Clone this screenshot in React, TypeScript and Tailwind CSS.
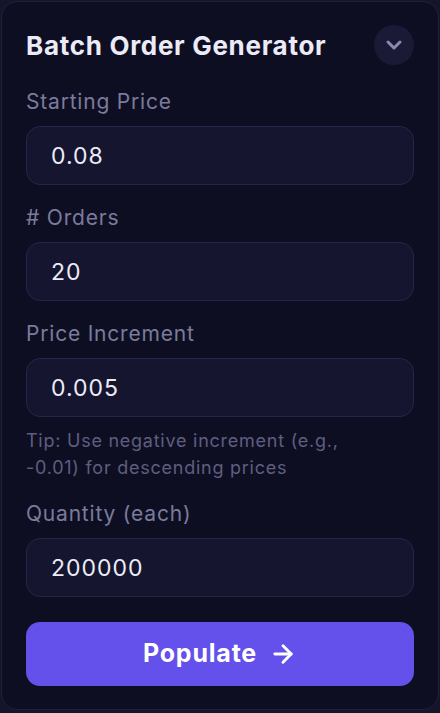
import React, { useState } from 'react';
import { ChevronDown, ArrowRight } from 'lucide-react';

const Field: React.FC<{ label: string; value: string; onChange: (v: string) => void }> = ({
  label,
  value,
  onChange,
}) => (
  <div>
    <label className="block text-[21px] leading-[28px] tracking-[0.8px] text-[#7b7b9c] mb-[10px]">{label}</label>
    <input
      value={value}
      onChange={(e) => onChange(e.target.value)}
      className="w-full h-[59px] rounded-[14px] bg-[#15152f] border border-[#25254a] px-6 text-[23px] tracking-[1px] text-[#ececf6] outline-none"
    />
  </div>
);

export default function App() {
  const [startPrice, setStartPrice] = useState('0.08');
  const [orders, setOrders] = useState('20');
  const [increment, setIncrement] = useState('0.005');
  const [quantity, setQuantity] = useState('200000');

  return (
    <div className="min-h-screen bg-[#14142a] p-px" style={{ fontFamily: 'Inter, "Noto Sans", sans-serif' }}>
      <div className="h-[709px] rounded-[16px] border border-[#1f1f3a] bg-[#0e0e22] px-6 pt-[23px]">
        {/* Header */}
        <div className="flex items-center justify-between h-10">
          <h2 className="text-[26px] font-bold tracking-[0.7px] text-[#ebebf7]">Batch Order Generator</h2>
          <button className="w-10 h-10 rounded-full bg-[#1a1a36] flex items-center justify-center">
            <ChevronDown className="w-6 h-6 text-[#8a8ab0]" strokeWidth={3} />
          </button>
        </div>

        <div className="mt-[23px]">
          <Field label="Starting Price" value={startPrice} onChange={setStartPrice} />
        </div>
        <div className="mt-[19px]">
          <Field label="# Orders" value={orders} onChange={setOrders} />
        </div>
        <div className="mt-[19px]">
          <Field label="Price Increment" value={increment} onChange={setIncrement} />
          <p className="mt-[10px] pr-[30px] text-[18px] leading-[27px] tracking-[0.75px] text-[#5e5e80]">
            Tip: Use negative increment (e.g., -0.01) for descending prices
          </p>
        </div>
        <div className="mt-[19px]">
          <Field label="Quantity (each)" value={quantity} onChange={setQuantity} />
        </div>

        <button className="mt-[25px] w-full h-16 rounded-[14px] bg-[#6450ea] flex items-center justify-center gap-3 text-white text-[25px] tracking-[0.8px] font-bold">
          Populate
          <ArrowRight className="w-7 h-7" strokeWidth={2.5} />
        </button>
      </div>
    </div>
  );
}
